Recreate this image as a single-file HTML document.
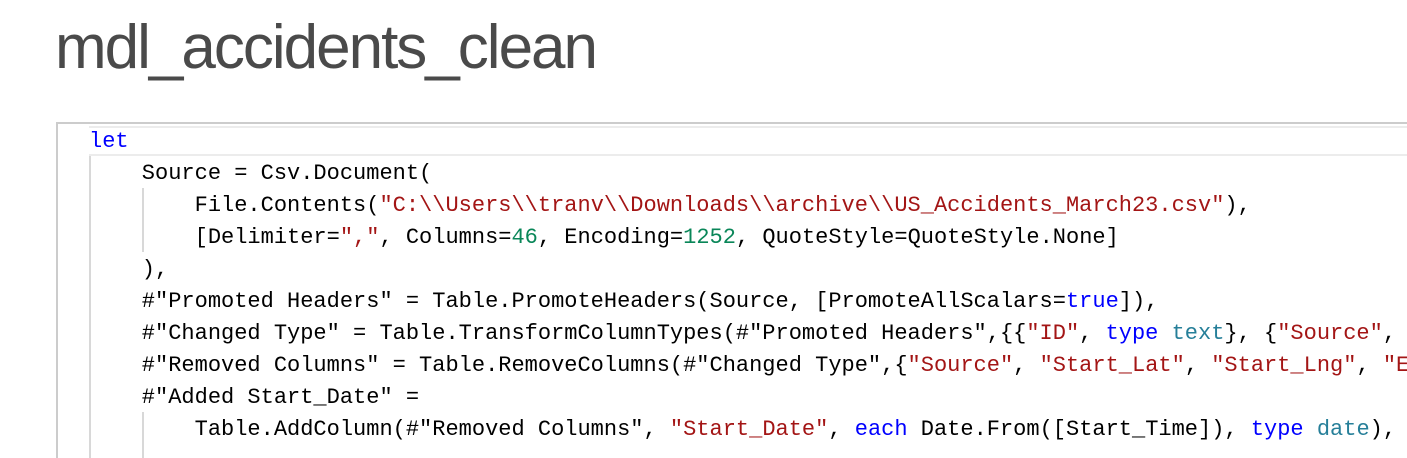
<!DOCTYPE html>
<html><head><meta charset="utf-8"><style>
html,body{margin:0;padding:0;background:#fff;width:1407px;height:458px;overflow:hidden;position:relative;}
.title{position:absolute;left:55px;top:8px;font-family:"Liberation Sans",sans-serif;font-size:62px;letter-spacing:-2px;color:#4a4a4a;line-height:80px;white-space:nowrap;}
.ed{position:absolute;left:56px;top:122px;width:1351px;height:336px;border-left:2px solid #ccc;border-top:2px solid #ccc;box-sizing:border-box;}
.hl{position:absolute;left:89px;top:126px;width:1318px;height:26px;border-top:2px solid #ececec;border-bottom:2px solid #ececec;background:#fff;}
.code{position:absolute;left:89px;top:126px;font-family:"Liberation Mono",monospace;font-size:22px;line-height:32px;white-space:pre;color:#000;}
.g{position:absolute;width:2px;background:#d8d8d8;}
.k{color:#0000ff}.s{color:#a31515}.n{color:#098658}.t{color:#267f99}
</style></head><body>
<div class="title">mdl_accidents_clean</div>
<div class="ed"></div>
<div class="hl"></div>
<div class="g" style="left:89px;top:156px;height:302px"></div>
<div class="g" style="left:142px;top:188px;height:64px"></div>
<div class="g" style="left:142px;top:412px;height:46px"></div>
<div class="code"><span class="k">let</span>
    Source = Csv.Document(
        File.Contents(<span class="s">"C:\\Users\\tranv\\Downloads\\archive\\US_Accidents_March23.csv"</span>),
        [Delimiter=<span class="s">","</span>, Columns=<span class="n">46</span>, Encoding=<span class="n">1252</span>, QuoteStyle=QuoteStyle.None]
    ),
    #"Promoted Headers" = Table.PromoteHeaders(Source, [PromoteAllScalars=<span class="k">true</span>]),
    #"Changed Type" = Table.TransformColumnTypes(#"Promoted Headers",{{<span class="s">"ID"</span>, <span class="k">type</span> <span class="t">text</span>}, {<span class="s">"Source"</span>, 
    #"Removed Columns" = Table.RemoveColumns(#"Changed Type",{<span class="s">"Source"</span>, <span class="s">"Start_Lat"</span>, <span class="s">"Start_Lng"</span>, <span class="s">"E</span>
    #"Added Start_Date" =
        Table.AddColumn(#"Removed Columns", <span class="s">"Start_Date"</span>, <span class="k">each</span> Date.From([Start_Time]), <span class="k">type</span> <span class="t">date</span>),
</div>
</body></html>
